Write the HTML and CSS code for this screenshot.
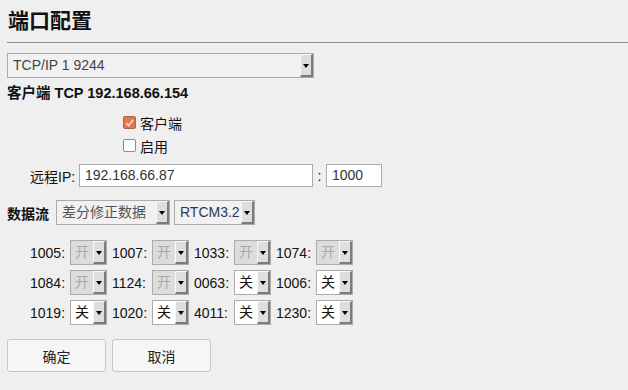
FILE: index.html
```html
<!DOCTYPE html>
<html lang="zh-CN">
<head>
    <meta charset="UTF-8">
    <title>端口配置</title>
    <link rel="stylesheet" href="styles.css">
</head>
<body>
    <div class="page">
        <h1 class="title">端口配置</h1>

        <div class="combo port">
            <span class="value">TCP/IP 1 9244</span>
            <span class="arrow"></span>
        </div>

        <div class="summary">客户端 TCP 192.168.66.154</div>

        <div class="checks">
            <label class="check-row">
                <span class="box checked">
                    <svg width="12" height="12" viewBox="0 0 12 12"><path d="M2.5 6.2 L5 8.8 L10 2.6" fill="none" stroke="#f6e6dc" stroke-width="1.6"/></svg>
                </span>
                客户端
            </label>
            <label class="check-row">
                <span class="box"></span>
                启用
            </label>
        </div>

        <div class="remote">
            <span class="remote-label">远程IP:</span>
            <div class="field ip">192.168.66.87</div>
            <span class="colon">:</span>
            <div class="field port-num">1000</div>
        </div>

        <div class="stream">
            <span class="stream-label">数据流</span>
            <div class="combo kind">
                <span class="value">差分修正数据</span>
                <span class="arrow"></span>
            </div>
            <div class="combo format">
                <span class="value">RTCM3.2</span>
                <span class="arrow"></span>
            </div>
        </div>

        <div class="messages">
            <div class="msg"><span class="msg-id">1005:</span><div class="combo small off"><span class="value">开</span><span class="arrow"></span></div></div>
            <div class="msg"><span class="msg-id">1007:</span><div class="combo small off"><span class="value">开</span><span class="arrow"></span></div></div>
            <div class="msg"><span class="msg-id">1033:</span><div class="combo small off"><span class="value">开</span><span class="arrow"></span></div></div>
            <div class="msg"><span class="msg-id">1074:</span><div class="combo small off"><span class="value">开</span><span class="arrow"></span></div></div>

            <div class="msg"><span class="msg-id">1084:</span><div class="combo small off"><span class="value">开</span><span class="arrow"></span></div></div>
            <div class="msg"><span class="msg-id">1124:</span><div class="combo small off"><span class="value">开</span><span class="arrow"></span></div></div>
            <div class="msg"><span class="msg-id">0063:</span><div class="combo small"><span class="value">关</span><span class="arrow"></span></div></div>
            <div class="msg"><span class="msg-id">1006:</span><div class="combo small"><span class="value">关</span><span class="arrow"></span></div></div>

            <div class="msg"><span class="msg-id">1019:</span><div class="combo small"><span class="value">关</span><span class="arrow"></span></div></div>
            <div class="msg"><span class="msg-id">1020:</span><div class="combo small"><span class="value">关</span><span class="arrow"></span></div></div>
            <div class="msg"><span class="msg-id">4011:</span><div class="combo small"><span class="value">关</span><span class="arrow"></span></div></div>
            <div class="msg"><span class="msg-id">1230:</span><div class="combo small"><span class="value">关</span><span class="arrow"></span></div></div>
        </div>

        <div class="actions">
            <button class="button">确定</button>
            <button class="button">取消</button>
        </div>
    </div>
</body>
</html>
```

FILE: styles.css
```css
* {
    margin: 0;
    padding: 0;
    box-sizing: border-box;
}

body {
    font-family: "Liberation Sans", "Noto Sans CJK SC", sans-serif;
    font-size: 14px;
    color: #111;
    background-color: #efefef;
    width: 628px;
    height: 390px;
    overflow: hidden;
}

.page {
    padding-left: 7px;
}

.title {
    font-size: 21px;
    font-weight: bold;
    line-height: 26px;
    padding: 8px 0 8px 1px;
    border-bottom: 1px solid #8a8a8a;
}

/* fake combo boxes */
.combo {
    display: flex;
    height: 25px;
    border: 1px solid #ababab;
    background-color: #f1f1f1;
}

.combo .value {
    flex: 1;
    padding-left: 5px;
    line-height: 23px;
    color: #444;
    white-space: nowrap;
    overflow: hidden;
}

.combo .arrow {
    width: 13px;
    display: flex;
    align-items: center;
    justify-content: center;
    background-color: #dedede;
    border-top: 1px solid #fafafa;
    border-left: 1px solid #fafafa;
    border-right: 2px solid #7c7c7c;
    border-bottom: 2px solid #7c7c7c;
}

.combo .arrow::after {
    content: "";
    border-top: 4px solid #000;
    border-left: 3px solid transparent;
    border-right: 3px solid transparent;
    margin-top: 1px;
}

.port {
    width: 307px;
    margin-top: 10px;
}

.summary {
    font-size: 14.5px;
    font-weight: bold;
    line-height: 20px;
    margin-top: 5px;
}

.checks {
    margin-top: 8px;
    margin-left: 116px;
}

.check-row {
    display: flex;
    align-items: center;
    gap: 4px;
    height: 23px;
}

.box {
    width: 13px;
    height: 13px;
    border: 1px solid #8c8c8c;
    border-radius: 2px;
    background-color: #fff;
    display: flex;
    align-items: center;
    justify-content: center;
}

.box.checked {
    background-color: #e4784c;
    border-color: #a9644a;
}

.remote {
    display: flex;
    align-items: center;
    margin-top: 7px;
    margin-left: 23px;
    height: 23px;
}

.remote-label {
    width: 49px;
}

.field {
    height: 23px;
    border: 1px solid #ababab;
    background-color: #fff;
    line-height: 21px;
    padding-left: 5px;
    color: #333;
}

.ip {
    width: 234px;
}

.colon {
    width: 13px;
    text-align: center;
}

.port-num {
    width: 56px;
}

.stream {
    display: flex;
    align-items: center;
    gap: 4px;
    margin-top: 13px;
}

.stream-label {
    font-weight: bold;
    width: 45px;
}

.kind {
    width: 114px;
}

.kind .value {
    color: #555;
}

.format {
    width: 81px;
}

.format .value {
    color: #2c3a52;
}

.messages {
    display: grid;
    grid-template-columns: repeat(4, 77px);
    column-gap: 5px;
    row-gap: 5px;
    margin-top: 15px;
    margin-left: 23px;
}

.msg {
    display: flex;
    align-items: center;
    gap: 4px;
}

.msg-id {
    width: 36px;
}

.combo.small {
    width: 37px;
    background-color: #fff;
}

.combo.small .value {
    padding-left: 4px;
    color: #111;
}

.combo.small.off {
    background-color: #dcdcdc;
}

.combo.small.off .value {
    color: #aaa;
}

.actions {
    display: flex;
    gap: 6px;
    margin-top: 14px;
}

.button {
    width: 99px;
    height: 33px;
    background-color: #f6f6f6;
    border: 1px solid #c6c6c6;
    border-radius: 3px;
    font-family: inherit;
    font-size: 14px;
    color: #222;
}
```
